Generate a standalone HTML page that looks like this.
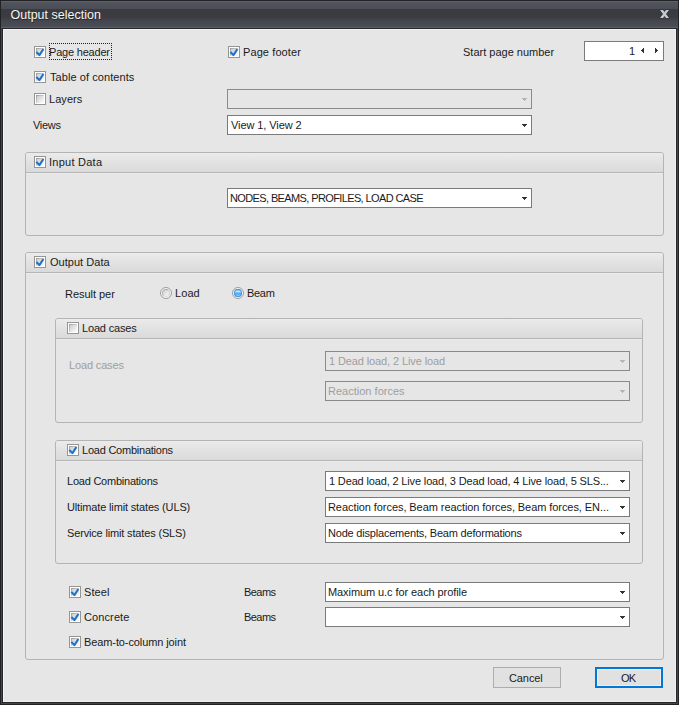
<!DOCTYPE html>
<html><head><meta charset="utf-8">
<style>
*{margin:0;padding:0;box-sizing:border-box}
html,body{width:679px;height:705px;overflow:hidden;background:#202226}
body{position:relative;font-family:"Liberation Sans",sans-serif;font-size:11px;color:#1a1a1a}
.a{position:absolute}
.t{position:absolute;white-space:nowrap;line-height:13px}
#frame{left:0;top:0;width:679px;height:705px;background:#202226}
#fr2{left:1px;top:1px;width:677px;height:703px;background:#44464b;box-shadow:inset 0 0 0 0 #000}
#title{left:1px;top:1px;width:677px;height:27px;background:linear-gradient(#5e616a 0,#5e616a 1px,#52555d 1px,#4a4d55 8px,#3a3b3f 8px,#3b3c41 16px,#44474e 20px,#4b4e56 26px,#5c5f68 26px,#5c5f68 27px)}
#tline{left:2px;top:28px;width:675px;height:1px;background:#202327}
#client{left:3px;top:29px;width:673px;height:673px;background:#e6e6e6;border-top:1px solid #f4f4f4;border-left:1px solid #f4f4f4;border-right:1px solid #f0f0f0;border-bottom:1px solid #f0f0f0;box-shadow:0 0 0 1px #25272b}
#ttext{left:10.5px;top:8px;font-size:12.5px;color:#f6f6f6;line-height:15px;text-shadow:0.5px 0.5px 0 rgba(0,0,0,0.45)}
.cb{position:absolute;width:12px;height:12px;border:1px solid #959595;background:#fff}
.cb::before{content:"";position:absolute;left:1px;top:1px;width:8px;height:8px;background:linear-gradient(90deg,#9c9c9c,#d0d0d0) 0 0/100% 1px no-repeat,linear-gradient(#9c9c9c,#d0d0d0) 0 0/1px 100% no-repeat,linear-gradient(135deg,#c8c8c8,#e2e2e2 50%,#f8f8f8 90%)}
.cb svg{position:absolute;left:0;top:0}
.combo{position:absolute;height:20px;border:1px solid #7a7a7a;background:#fff}
.combo.dis{background:#e6e6e6;border-color:#8a8a8a}
.combo .arr{position:absolute;right:4px;top:8px;width:5px;height:3px;--c:#333;background:linear-gradient(var(--c),var(--c)) 0 0/5px 1px no-repeat,linear-gradient(var(--c),var(--c)) 1px 1px/3px 1px no-repeat,linear-gradient(var(--c),var(--c)) 2px 2px/1px 1px no-repeat}
.combo.dis .arr{--c:#b4b4b4}
.combo .ct{position:absolute;left:3px;top:3px;line-height:13px;white-space:nowrap}
.combo.dis .ct{color:#9e9e9e}
.grp{position:absolute;border:1px solid #b4b4b4;border-radius:3px;background:#e6e6e6}
.grp .hd{position:absolute;left:0;top:0;right:0;height:20px;background:linear-gradient(#ebebeb,#e2e2e2 50%,#dadada);border-bottom:1px solid #b6b6b6;border-radius:2px 2px 0 0;box-shadow:0 1px 0 #ececec}
.radio{position:absolute;width:12px;height:12px;border-radius:50%;border:1px solid #9c9c9c;background:#f6f6f6}
.radio::before{content:"";position:absolute;left:1px;top:1px;width:8px;height:8px;border-radius:50%;box-sizing:border-box;border:1px solid;border-color:#a8a8a8 #cfcfcf #dedede #b4b4b4;background:linear-gradient(135deg,#cdcdcd,#f2f2f2 80%)}
.radio.on::before{border:none;background:linear-gradient(#4aa0e8 0,#cbe8fc 30%,#7fc0f3 45%,#4fa6ec 60%,#8fd0f8 85%,#5eb2ef 100%);box-shadow:inset 0 0 0 1px #3f98e6}
.btn{position:absolute;height:21px;width:68px;border:1px solid #adadad;background:#e1e1e1}
.btn.ok{border:2px solid #0078d7;box-shadow:inset 0 0 0 1px #f2ecea}
.gray{color:#9e9e9e}
</style></head><body>
<div id="frame" class="a"></div><div id="fr2" class="a"></div><div id="title" class="a"></div><div id="tline" class="a"></div><div id="client" class="a"></div>
<div id="ttext" class="t">Output selection</div>
<svg class="a" style="left:659px;top:9px" width="11" height="10" viewBox="0 0 11 10"><g transform="translate(1,1)"><path d="M0 0H3L9 8H6ZM6 0H9L3 8H0Z" fill="#2a2c30" stroke="#2a2c30" stroke-width="1.2" opacity="0.7"/><path d="M0 0H3L9 8H6ZM6 0H9L3 8H0Z" fill="#c4cbd3"/></g></svg>
<div class="cb" style="left:34px;top:46px"><svg width="10" height="10"><path d="M1.3 5.1L4.4 8.1L8.4 2" fill="none" stroke="#2171c8" stroke-width="2.1" stroke-linejoin="round"/></svg></div>
<div class="a" style="left:49px;top:43px;width:63px;height:17px;border:1px dotted #222"></div>
<div class="t " style="left:49px;top:46px;letter-spacing:-0.2px">Page header</div>
<div class="cb" style="left:228px;top:46px"><svg width="10" height="10"><path d="M1.3 5.1L4.4 8.1L8.4 2" fill="none" stroke="#2171c8" stroke-width="2.1" stroke-linejoin="round"/></svg></div>
<div class="t " style="left:243px;top:46px;letter-spacing:0.1px">Page footer</div>
<div class="t " style="left:463px;top:46px;letter-spacing:0px">Start page number</div>
<div class="combo" style="left:584px;top:41px;width:80px"><div class="ct" style="left:44px;letter-spacing:-0.5px">1</div><div class="a" style="left:56px;top:6px;width:3px;height:5px;background:linear-gradient(#333,#333) 0px 2px/1px 1px no-repeat,linear-gradient(#333,#333) 1px 1px/1px 3px no-repeat,linear-gradient(#333,#333) 2px 0px/1px 5px no-repeat"></div><div class="a" style="left:70px;top:6px;width:3px;height:5px;background:linear-gradient(#333,#333) 2px 2px/1px 1px no-repeat,linear-gradient(#333,#333) 1px 1px/1px 3px no-repeat,linear-gradient(#333,#333) 0px 0px/1px 5px no-repeat"></div></div>
<div class="cb" style="left:34px;top:71px"><svg width="10" height="10"><path d="M1.3 5.1L4.4 8.1L8.4 2" fill="none" stroke="#2171c8" stroke-width="2.1" stroke-linejoin="round"/></svg></div>
<div class="t " style="left:50px;top:71px;letter-spacing:0.07px">Table of contents</div>
<div class="cb" style="left:34px;top:93px"></div>
<div class="t " style="left:49px;top:93px;letter-spacing:0.06px">Layers</div>
<div class="combo dis" style="left:227px;top:89px;width:305px"><div class="arr"></div></div>
<div class="t " style="left:33px;top:119px;letter-spacing:-0.3px">Views</div>
<div class="combo" style="left:227px;top:115px;width:305px"><div class="ct" style="left:3px;letter-spacing:-0.08px">View 1, View 2</div><div class="arr"></div></div>
<div class="grp" style="left:25px;top:152px;width:639px;height:84px"><div class="hd"></div></div>
<div class="cb" style="left:34px;top:156px"><svg width="10" height="10"><path d="M1.3 5.1L4.4 8.1L8.4 2" fill="none" stroke="#2171c8" stroke-width="2.1" stroke-linejoin="round"/></svg></div>
<div class="t " style="left:49px;top:156px;letter-spacing:0.25px">Input Data</div>
<div class="combo" style="left:227px;top:188px;width:305px"><div class="ct" style="left:2px;letter-spacing:-0.62px">NODES, BEAMS, PROFILES, LOAD CASE</div><div class="arr"></div></div>
<div class="grp" style="left:25px;top:252px;width:639px;height:408px"><div class="hd"></div></div>
<div class="cb" style="left:34px;top:256px"><svg width="10" height="10"><path d="M1.3 5.1L4.4 8.1L8.4 2" fill="none" stroke="#2171c8" stroke-width="2.1" stroke-linejoin="round"/></svg></div>
<div class="t " style="left:50px;top:256px;letter-spacing:0.03px">Output Data</div>
<div class="t " style="left:65px;top:288px;letter-spacing:-0.03px">Result per</div>
<div class="radio" style="left:160px;top:287px"></div>
<div class="t " style="left:175px;top:287px;letter-spacing:0.07px">Load</div>
<div class="radio on" style="left:232px;top:287px"></div>
<div class="t " style="left:247px;top:287px;letter-spacing:-0.3px">Beam</div>
<div class="grp" style="left:55px;top:318px;width:588px;height:105px"><div class="hd"></div></div>
<div class="cb" style="left:67px;top:322px"></div>
<div class="t " style="left:82px;top:322px;letter-spacing:-0.18px">Load cases</div>
<div class="t gray" style="left:69px;top:359px;letter-spacing:-0.15px">Load cases</div>
<div class="combo dis" style="left:325px;top:351px;width:305px"><div class="ct" style="left:3px;letter-spacing:-0.11px">1 Dead load, 2 Live load</div><div class="arr"></div></div>
<div class="combo dis" style="left:325px;top:381px;width:305px"><div class="ct" style="left:2px;letter-spacing:0.01px">Reaction forces</div><div class="arr"></div></div>
<div class="grp" style="left:55px;top:440px;width:588px;height:124px"><div class="hd"></div></div>
<div class="cb" style="left:67px;top:444px"><svg width="10" height="10"><path d="M1.3 5.1L4.4 8.1L8.4 2" fill="none" stroke="#2171c8" stroke-width="2.1" stroke-linejoin="round"/></svg></div>
<div class="t " style="left:82px;top:444px;letter-spacing:-0.23px">Load Combinations</div>
<div class="t " style="left:67px;top:475px;letter-spacing:-0.23px">Load Combinations</div>
<div class="t " style="left:67px;top:501px;letter-spacing:-0.15px">Ultimate limit states (ULS)</div>
<div class="t " style="left:67px;top:527px;letter-spacing:-0.16px">Service limit states (SLS)</div>
<div class="combo" style="left:325px;top:471px;width:305px"><div class="ct" style="left:3px;letter-spacing:-0.15px">1 Dead load, 2 Live load, 3 Dead load, 4 Live load, 5 SLS...</div><div class="arr"></div></div>
<div class="combo" style="left:325px;top:497px;width:305px"><div class="ct" style="left:2px;letter-spacing:-0.07px">Reaction forces, Beam reaction forces, Beam forces, EN...</div><div class="arr"></div></div>
<div class="combo" style="left:325px;top:523px;width:305px"><div class="ct" style="left:2px;letter-spacing:-0.2px">Node displacements, Beam deformations</div><div class="arr"></div></div>
<div class="cb" style="left:69px;top:586px"><svg width="10" height="10"><path d="M1.3 5.1L4.4 8.1L8.4 2" fill="none" stroke="#2171c8" stroke-width="2.1" stroke-linejoin="round"/></svg></div>
<div class="t " style="left:84px;top:586px;letter-spacing:0.1px">Steel</div>
<div class="t " style="left:244px;top:586px;letter-spacing:-0.55px">Beams</div>
<div class="combo" style="left:325px;top:582px;width:305px"><div class="ct" style="left:2px;letter-spacing:-0.08px">Maximum u.c for each profile</div><div class="arr"></div></div>
<div class="cb" style="left:69px;top:611px"><svg width="10" height="10"><path d="M1.3 5.1L4.4 8.1L8.4 2" fill="none" stroke="#2171c8" stroke-width="2.1" stroke-linejoin="round"/></svg></div>
<div class="t " style="left:84px;top:611px;letter-spacing:0.11px">Concrete</div>
<div class="t " style="left:244px;top:611px;letter-spacing:-0.55px">Beams</div>
<div class="combo" style="left:325px;top:607px;width:305px"><div class="arr"></div></div>
<div class="cb" style="left:69px;top:636px"><svg width="10" height="10"><path d="M1.3 5.1L4.4 8.1L8.4 2" fill="none" stroke="#2171c8" stroke-width="2.1" stroke-linejoin="round"/></svg></div>
<div class="t " style="left:84px;top:636px;letter-spacing:-0.1px">Beam-to-column joint</div>
<div class="btn" style="left:493px;top:667px"></div>
<div class="t " style="left:509px;top:672px;letter-spacing:-0.1px">Cancel</div>
<div class="btn ok" style="left:595px;top:667px"></div>
<div class="t " style="left:621px;top:672px;letter-spacing:-0.9px">OK</div>
</body></html>
